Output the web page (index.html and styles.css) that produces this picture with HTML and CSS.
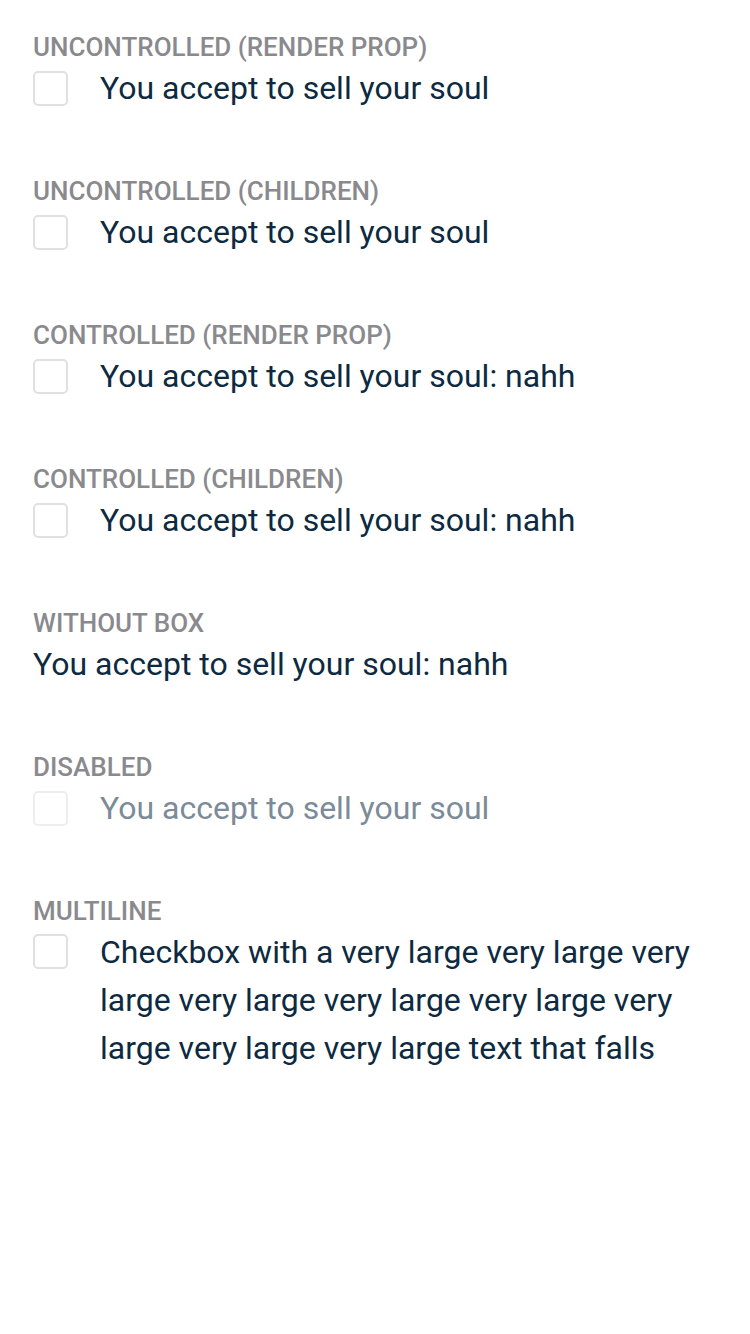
FILE: index.html
```html
<!DOCTYPE html>
<html>
<head>
<meta charset="utf-8">
<link rel="stylesheet" href="styles.css">
</head>
<body>
<main class="page">
  <section class="group">
    <h2 class="title">Uncontrolled (render prop)</h2>
    <label class="row"><span class="box"></span><span class="label">You accept to sell your soul</span></label>
  </section>
  <section class="group">
    <h2 class="title">Uncontrolled (children)</h2>
    <label class="row"><span class="box"></span><span class="label">You accept to sell your soul</span></label>
  </section>
  <section class="group">
    <h2 class="title">Controlled (render prop)</h2>
    <label class="row"><span class="box"></span><span class="label">You accept to sell your soul: nahh</span></label>
  </section>
  <section class="group">
    <h2 class="title">Controlled (children)</h2>
    <label class="row"><span class="box"></span><span class="label">You accept to sell your soul: nahh</span></label>
  </section>
  <section class="group">
    <h2 class="title">Without box</h2>
    <label class="row plain"><span class="label">You accept to sell your soul: nahh</span></label>
  </section>
  <section class="group">
    <h2 class="title">Disabled</h2>
    <label class="row disabled"><span class="box"></span><span class="label">You accept to sell your soul</span></label>
  </section>
  <section class="group last">
    <h2 class="title">Multiline</h2>
    <label class="row multi"><span class="box"></span><span class="label">Checkbox with a very large very large very large very large very large very large very large very large very large text that falls</span></label>
  </section>
</main>
</body>
</html>
```
FILE: styles.css
```css
html, body { margin: 0; padding: 0; background: #fff; }
.page {
  font-family: Roboto, "Liberation Sans", sans-serif;
  padding: 34px 32px 0 33px;
  display: flex;
  flex-direction: column;
}
.group { height: 144px; }
.group.last { height: auto; }
.title {
  margin: 0;
  font-size: 26px;
  font-weight: 500;
  line-height: 26px;
  color: #8a8a8e;
  text-transform: uppercase;
}
.row {
  display: flex;
  align-items: center;
  gap: 32px;
  margin-top: 8px;
}
.box {
  flex: none;
  box-sizing: border-box;
  width: 35px;
  height: 35px;
  border: 2px solid #e0e0e0;
  border-radius: 5px;
}
.label {
  font-size: 32px;
  line-height: 40px;
  color: #0d2a40;
}
.disabled .box { border-color: #eeeeee; }
.disabled .label { color: #7b8b97; }
.multi { align-items: flex-start; margin-top: 4px; }
.multi .box { margin-top: 6px; }
.multi .label { line-height: 48px; }
```
